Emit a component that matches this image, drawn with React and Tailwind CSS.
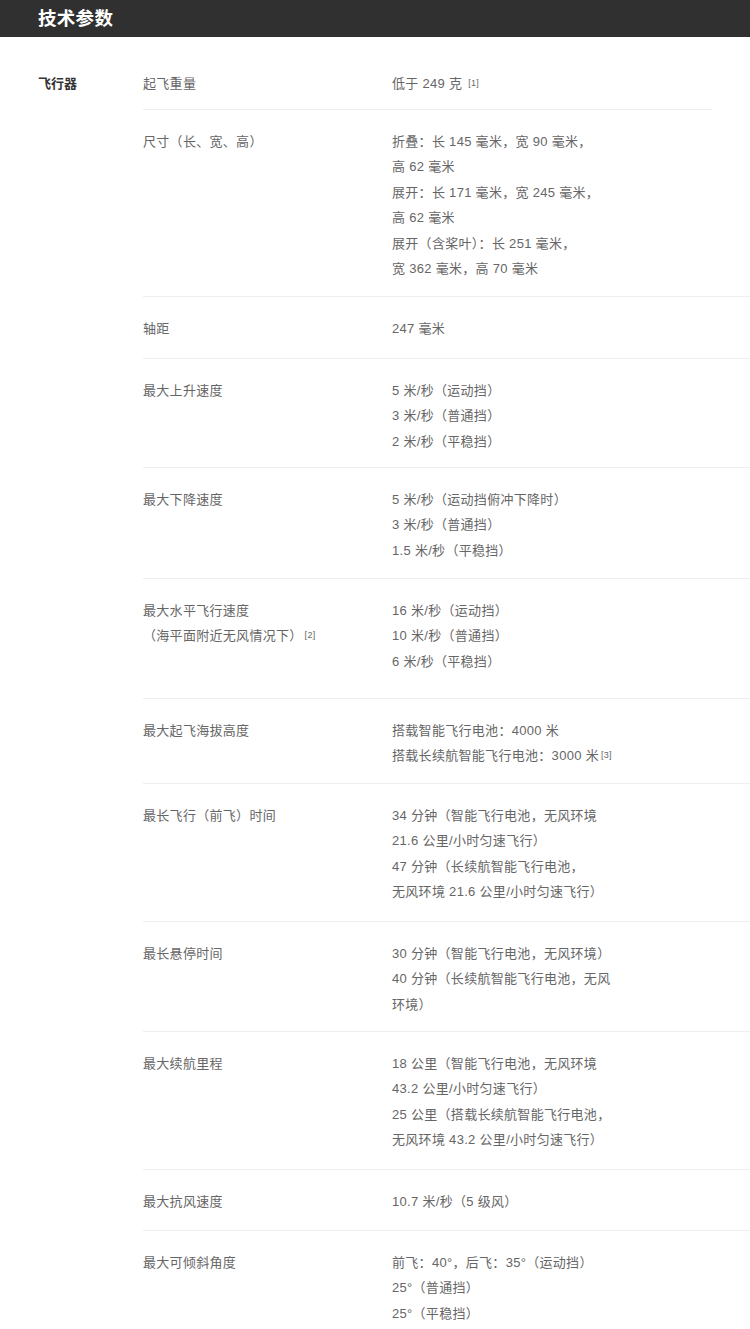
import React from 'react';

const Sup = ({ n }) => (
  <sup className="ml-[2px] text-[9px] relative -top-[2px]">[{n}]</sup>
);

// pb: bottom padding of each row, read off the screenshot
const rows = [
  { label: ['起飞重量'], value: [<>低于 249 克 <Sup n={1} /></>], pb: 'pb-[12px]' },
  {
    label: ['尺寸（长、宽、高）'],
    value: [
      '折叠：长 145 毫米，宽 90 毫米，',
      '高 62 毫米',
      '展开：长 171 毫米，宽 245 毫米，',
      '高 62 毫米',
      '展开（含桨叶）：长 251 毫米，',
      '宽 362 毫米，高 70 毫米',
    ],
    pb: 'pb-[14px]',
  },
  { label: ['轴距'], value: ['247 毫米'], pb: 'pb-[16.5px]' },
  {
    label: ['最大上升速度'],
    value: ['5 米/秒（运动挡）', '3 米/秒（普通挡）', '2 米/秒（平稳挡）'],
    pb: 'pb-[12.5px]',
  },
  {
    label: ['最大下降速度'],
    value: ['5 米/秒（运动挡俯冲下降时）', '3 米/秒（普通挡）', '1.5 米/秒（平稳挡）'],
    pb: 'pb-[14.5px]',
  },
  {
    label: ['最大水平飞行速度', <>（海平面附近无风情况下）<Sup n={2} /></>],
    value: ['16 米/秒（运动挡）', '10 米/秒（普通挡）', '6 米/秒（平稳挡）'],
    pb: 'pb-[23.5px]',
  },
  {
    label: ['最大起飞海拔高度'],
    value: ['搭载智能飞行电池：4000 米', <>搭载长续航智能飞行电池：3000 米<Sup n={3} /></>],
    pb: 'pb-[14px]',
  },
  {
    label: ['最长飞行（前飞）时间'],
    value: [
      '34 分钟（智能飞行电池，无风环境',
      '21.6 公里/小时匀速飞行）',
      '47 分钟（长续航智能飞行电池，',
      '无风环境 21.6 公里/小时匀速飞行）',
    ],
    pb: 'pb-[16px]',
  },
  {
    label: ['最长悬停时间'],
    value: ['30 分钟（智能飞行电池，无风环境）', '40 分钟（长续航智能飞行电池，无风', '环境）'],
    pb: 'pb-[13.5px]',
  },
  {
    label: ['最大续航里程'],
    value: [
      '18 公里（智能飞行电池，无风环境',
      '43.2 公里/小时匀速飞行）',
      '25 公里（搭载长续航智能飞行电池，',
      '无风环境 43.2 公里/小时匀速飞行）',
    ],
    pb: 'pb-[16px]',
  },
  { label: ['最大抗风速度'], value: ['10.7 米/秒（5 级风）'], pb: 'pb-[15.5px]' },
  {
    label: ['最大可倾斜角度'],
    value: ['前飞：40°，后飞：35°（运动挡）', '25°（普通挡）', '25°（平稳挡）'],
    pb: 'pb-[15px]',
    last: true,
  },
];

export default function App() {
  return (
    <div
      className="min-h-screen bg-white"
      style={{ fontFamily: '"Liberation Sans", "Noto Sans CJK SC", sans-serif' }}
    >
      <div className="h-[37px] bg-[#303030] flex items-center pl-[38px]">
        <h1 className="text-[18.5px] font-bold text-white tracking-[0.3px]">技术参数</h1>
      </div>

      <div className="flex pl-[38px] pt-[15.25px]">
        <div className="w-[105px] pt-[19px] text-[13px] leading-[25.5px] font-bold text-[#333]">
          飞行器
        </div>
        <div className="flex-1">
          {rows.map((row, i) => (
            <div
              key={i}
              className={`flex pt-[19px] text-[13px] leading-[25.5px] text-[#666] tracking-[0.3px] ${row.pb} ${
                row.last ? '' : 'border-b border-[#eeeeee]'
              } ${i === 0 ? 'mr-[38px]' : ''}`}
            >
              <div className="w-[249px] shrink-0">
                {row.label.map((l, j) => (
                  <div key={j} className="whitespace-nowrap">{l}</div>
                ))}
              </div>
              <div className="flex-1">
                {row.value.map((v, j) => (
                  <div key={j} className="whitespace-nowrap">{v}</div>
                ))}
              </div>
            </div>
          ))}
        </div>
      </div>
    </div>
  );
}
